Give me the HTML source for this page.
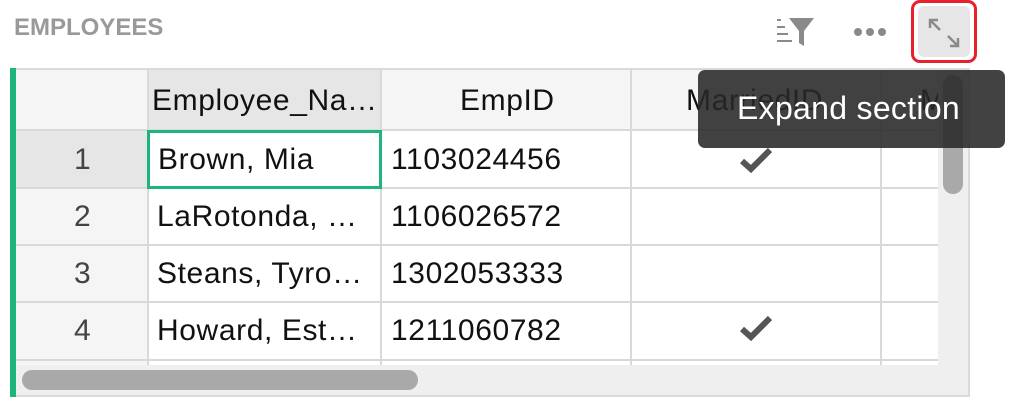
<!DOCTYPE html>
<html><head><style>
*{margin:0;padding:0;box-sizing:border-box}
body{width:1021px;height:410px;background:#fff;position:relative;overflow:hidden;font-family:"Liberation Sans",sans-serif}
.a{position:absolute}
.t{position:absolute;font-size:30px;color:#111;white-space:nowrap;line-height:1;letter-spacing:0.6px}
.hl{position:absolute;height:2px;background:#d9d9d9}
.vl{position:absolute;width:2px;background:#d9d9d9}
</style></head><body>
<div class="t" style="left:14px;top:16px;font-size:24px;font-weight:bold;color:#999;letter-spacing:0">EMPLOYEES</div>
<svg class="a" style="left:776px;top:16px" width="40" height="34" viewBox="0 0 40 34">
<g fill="#8a8a8a"><rect x="1" y="3" width="4" height="2"/><rect x="1" y="10" width="8" height="2"/><rect x="1" y="17" width="11" height="2"/><rect x="1" y="24" width="15" height="2"/>
<path d="M13 2H38L28 15V30L23 27V15Z"/></g></svg>
<svg class="a" style="left:852px;top:26px" width="36" height="12"><g fill="#8a8a8a"><circle cx="6" cy="6" r="4"/><circle cx="18" cy="6" r="4"/><circle cx="30" cy="6" r="4"/></g></svg>
<div class="a" style="left:911px;top:0;width:66px;height:63px;border:3px solid #e8202a;border-radius:9px;background:#fff"></div>
<div class="a" style="left:918px;top:6px;width:52px;height:51px;background:#e6e6e6;border-radius:6px"></div>
<svg class="a" style="left:928px;top:18px" width="32" height="30" viewBox="0 0 32 30"><g stroke="#8a8a8a" stroke-width="2.5" fill="none"><path d="M2 10V2H10M2 2L12 12M30 20V28H22M30 28L20 18"/></g></svg>
<div class="a" style="left:10px;top:68px;width:6px;height:329px;background:#1db57b"></div>
<div class="a" style="left:16px;top:68px;width:954px;height:329px;border:2px solid #dadada;border-left:none;background:#fff"></div>
<div class="a" style="left:16px;top:70px;width:922px;height:60px;background:#f5f5f5"></div>
<div class="a" style="left:148px;top:70px;width:233px;height:60px;background:#e6e6e6"></div>
<div class="a" style="left:16px;top:130px;width:132px;height:235px;background:#f5f5f5"></div>
<div class="a" style="left:16px;top:130px;width:132px;height:58px;background:#e6e6e6"></div>
<div class="hl" style="left:16px;top:129px;width:922px"></div>
<div class="hl" style="left:16px;top:187px;width:922px"></div>
<div class="hl" style="left:16px;top:244px;width:922px"></div>
<div class="hl" style="left:16px;top:301px;width:922px"></div>
<div class="hl" style="left:16px;top:359px;width:922px"></div>
<div class="vl" style="left:147px;top:70px;height:295px"></div>
<div class="vl" style="left:380px;top:70px;height:295px"></div>
<div class="vl" style="left:630px;top:70px;height:295px"></div>
<div class="vl" style="left:880px;top:70px;height:295px"></div>
<div class="a" style="left:147px;top:130px;width:235px;height:59px;border:3px solid #1db57b"></div>
<div class="t" style="left:152px;top:86px">Employee_Na…</div>
<div class="t" style="left:460px;top:86px">EmpID</div>
<div class="t" style="left:686px;top:86px">MarriedID</div>
<div class="t" style="left:920px;top:86px">M</div>
<div class="t" style="left:74px;top:145px;color:#444">1</div>
<div class="t" style="left:74px;top:202px;color:#444">2</div>
<div class="t" style="left:74px;top:259px;color:#444">3</div>
<div class="t" style="left:74px;top:316px;color:#444">4</div>
<div class="t" style="left:158px;top:145px">Brown, Mia</div>
<div class="t" style="left:157px;top:202px">LaRotonda, …</div>
<div class="t" style="left:157px;top:259px">Steans, Tyro…</div>
<div class="t" style="left:157px;top:316px">Howard, Est…</div>
<div class="t" style="left:391px;top:145px">1103024456</div>
<div class="t" style="left:391px;top:202px">1106026572</div>
<div class="t" style="left:391px;top:259px">1302053333</div>
<div class="t" style="left:391px;top:316px">1211060782</div>
<svg class="a" style="left:740px;top:145px" width="32" height="28"><path d="M2 16L11 24L30 5" stroke="#555" stroke-width="6" fill="none"/></svg>
<svg class="a" style="left:740px;top:313px" width="32" height="28"><path d="M2 16L11 24L30 5" stroke="#555" stroke-width="6" fill="none"/></svg>
<div class="a" style="left:938px;top:70px;width:30px;height:325px;background:#efefef"></div>
<div class="a" style="left:16px;top:365px;width:952px;height:30px;background:#efefef"></div>
<div class="a" style="left:943px;top:75px;width:20px;height:119px;background:#a9a9a9;border-radius:10px"></div>
<div class="a" style="left:22px;top:370px;width:396px;height:20px;background:#a9a9a9;border-radius:10px"></div>
<div class="a" style="left:698px;top:70px;width:307px;height:78px;background:rgba(40,40,40,0.88);border-radius:7px"></div>
<div class="t" style="left:737px;top:92px;font-size:32px;color:#fff;letter-spacing:0.3px">Expand section</div>
</body></html>
